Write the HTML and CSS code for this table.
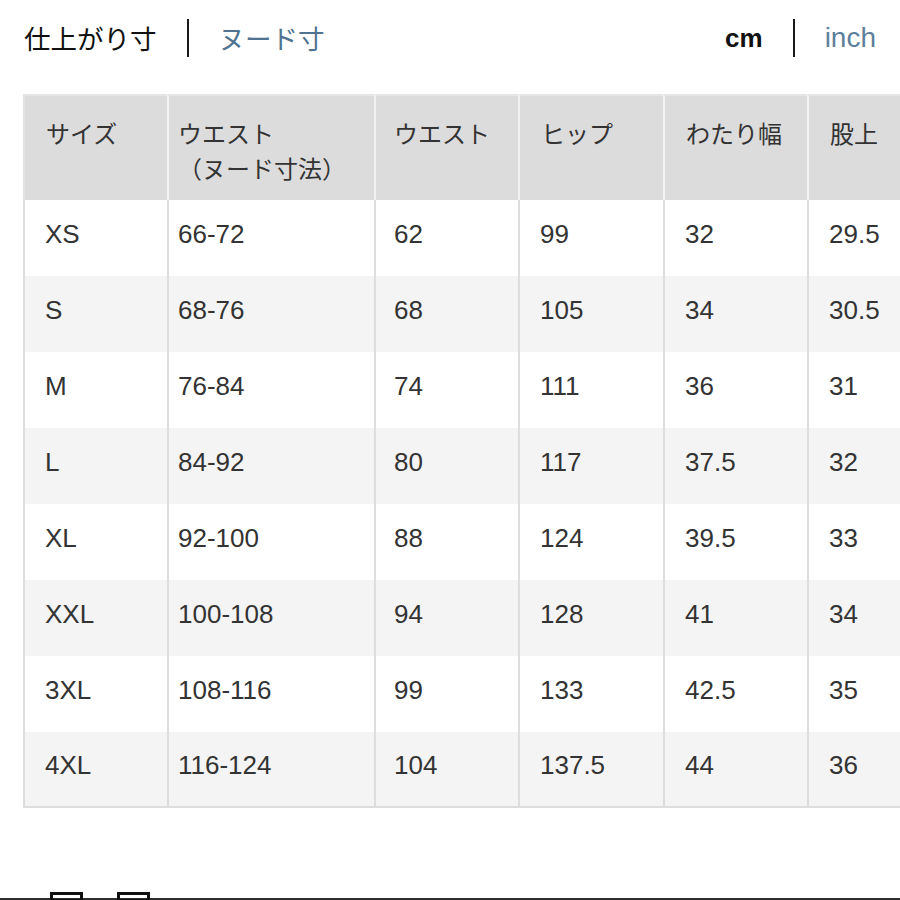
FILE: index.html
```html
<!DOCTYPE html>
<html lang="ja">
<head>
<meta charset="utf-8">
<link rel="stylesheet" href="styles.css">
</head>
<body>
<div class="page">
  <div class="topbar">
    <div class="toggle">
      <span class="opt active jp">仕上がり寸</span>
      <span class="sep"></span>
      <span class="opt link jp">ヌード寸</span>
    </div>
    <div class="toggle">
      <span class="opt active unit">cm</span>
      <span class="sep"></span>
      <span class="opt link unit">inch</span>
    </div>
  </div>
  <div class="tablewrap">
    <table class="size">
      <colgroup>
        <col class="c1"><col class="c2"><col class="c3"><col class="c4"><col class="c5"><col class="c6">
      </colgroup>
      <thead>
        <tr>
          <th>サイズ</th>
          <th class="narrow">ウエスト<br>（ヌード寸法）</th>
          <th>ウエスト</th>
          <th>ヒップ</th>
          <th>わたり幅</th>
          <th>股上</th>
        </tr>
      </thead>
      <tbody>
        <tr><td>XS</td><td class="narrow">66-72</td><td>62</td><td>99</td><td>32</td><td>29.5</td></tr>
        <tr><td>S</td><td class="narrow">68-76</td><td>68</td><td>105</td><td>34</td><td>30.5</td></tr>
        <tr><td>M</td><td class="narrow">76-84</td><td>74</td><td>111</td><td>36</td><td>31</td></tr>
        <tr><td>L</td><td class="narrow">84-92</td><td>80</td><td>117</td><td>37.5</td><td>32</td></tr>
        <tr><td>XL</td><td class="narrow">92-100</td><td>88</td><td>124</td><td>39.5</td><td>33</td></tr>
        <tr><td>XXL</td><td class="narrow">100-108</td><td>94</td><td>128</td><td>41</td><td>34</td></tr>
        <tr><td>3XL</td><td class="narrow">108-116</td><td>99</td><td>133</td><td>42.5</td><td>35</td></tr>
        <tr><td>4XL</td><td class="narrow">116-124</td><td>104</td><td>137.5</td><td>44</td><td>36</td></tr>
      </tbody>
    </table>
  </div>
  <div class="footer">
    <span class="box"></span>
    <span class="box"></span>
  </div>
</div>
</body>
</html>
```

FILE: styles.css
```css
html, body {
  margin: 0;
  padding: 0;
  background: #ffffff;
}

.page {
  width: 900px;
  height: 900px;
  overflow: hidden;
  font-family: "Liberation Sans", "Noto Sans CJK JP", sans-serif;
  color: #2f2f2f;
  display: flex;
  flex-direction: column;
}

.topbar {
  display: flex;
  justify-content: space-between;
  align-items: center;
  height: 76px;
  padding: 0 24px 0 24px;
  box-sizing: border-box;
  flex-shrink: 0;
}

.toggle {
  display: flex;
  align-items: center;
  gap: 30px;
}

.opt {
  font-size: 27px;
  line-height: 38px;
}

.jp {
  font-family: "Noto Sans CJK JP", sans-serif;
  font-size: 26.5px;
}

.opt.active {
  color: #111111;
}

.unit.active {
  font-weight: bold;
  font-size: 26px;
}

.unit.link {
  font-size: 28px;
}

.opt.link {
  color: #4f7391;
}

.unit.link {
  color: #5d7f9b;
}

.sep {
  display: block;
  width: 2px;
  height: 38px;
  background: #1a1a1a;
}

.tablewrap {
  margin-top: 18px;
  padding-left: 23px;
  width: 1000px;
  flex-shrink: 0;
}

.size {
  table-layout: fixed;
  width: 952px;
  border-collapse: separate;
  border-spacing: 0;
  font-size: 26px;
  color: #333333;
}

.c1 { width: 144px; }
.c2 { width: 207px; }
.c3 { width: 144px; }
.c4 { width: 145px; }
.c5 { width: 144px; }
.c6 { width: 168px; }

.size th {
  height: 106px;
  box-sizing: border-box;
  background: #dcdcdc;
  font-family: "Noto Sans CJK JP", sans-serif;
  font-weight: normal;
  font-size: 24px;
  line-height: 35px;
  text-align: left;
  vertical-align: top;
  padding: 19px 0 0 21px;
  border-left: 2px solid #f2f2f2;
  border-top: 2px solid #e6e6e6;
  color: #333333;
}

.size th:first-child {
  border-left: 2px solid #e2e2e2;
}

.size td {
  height: 76px;
  box-sizing: border-box;
  padding: 0 0 8px 20px;
  vertical-align: middle;
  border-left: 2px solid #dddddd;
  line-height: 30px;
  white-space: nowrap;
}

.size td:first-child {
  padding-left: 20px;
}

.size th.narrow,
.size td.narrow {
  padding-left: 9px;
}

.size th:nth-child(3),
.size td:nth-child(3) {
  padding-left: 18px;
}

.size tbody tr:nth-child(even) td {
  background: #f4f4f4;
}

.size tbody tr:last-child td {
  border-bottom: 2px solid #dddddd;
}

.footer {
  margin-top: 84px;
  height: 6px;
  border-bottom: 2px solid #2e2e2e;
  display: flex;
  gap: 34px;
  padding-left: 50px;
  align-items: flex-start;
  flex-shrink: 0;
}

.box {
  display: block;
  width: 33px;
  height: 10px;
  box-sizing: border-box;
  border: 3px solid #111111;
}
```
